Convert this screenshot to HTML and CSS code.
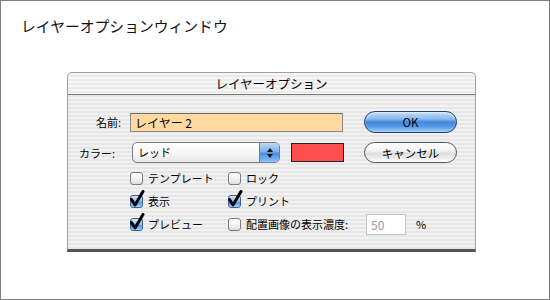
FILE: index.html
```html
<html>
<head>
    <meta charset="UTF-8">
    <link rel="stylesheet" href="styles.css">
</head>

<body>

<div class="screen">
    <h1 class="page-title">レイヤーオプションウィンドウ</h1>

    <div class="dialog">
        <div class="dialog-title">レイヤーオプション</div>
        <div class="dialog-body">
            <div class="row">
                <label class="label label-name">名前:</label>
                <div class="text-field name-field">レイヤー 2</div>
                <button class="btn btn-default">OK</button>
            </div>
            <div class="row row-color">
                <label class="label label-color">カラー:</label>
                <div class="popup">
                    <span class="popup-value">レッド</span>
                    <span class="popup-arrows">
                        <svg width="8" height="12" viewBox="0 0 8 12">
                            <path d="M4 1 L7 5 L1 5 Z" fill="#111"/>
                            <path d="M4 11 L7 7 L1 7 Z" fill="#111"/>
                        </svg>
                    </span>
                </div>
                <div class="swatch"></div>
                <button class="btn btn-cancel">キャンセル</button>
            </div>
            <div class="options">
                <div class="check"><span class="box"></span>テンプレート</div>
                <div class="check"><span class="box"></span>ロック</div>
                <div class="check">
                    <span class="box checked"><svg class="tick" width="16" height="17" viewBox="0 0 16 17"><path d="M2.5 9.5 L6 15 L14 1.5" fill="none" stroke="#000" stroke-width="3" stroke-linecap="round" stroke-linejoin="round"/></svg></span>表示
                </div>
                <div class="check">
                    <span class="box checked"><svg class="tick" width="16" height="17" viewBox="0 0 16 17"><path d="M2.5 9.5 L6 15 L14 1.5" fill="none" stroke="#000" stroke-width="3" stroke-linecap="round" stroke-linejoin="round"/></svg></span>プリント
                </div>
                <div class="check">
                    <span class="box checked"><svg class="tick" width="16" height="17" viewBox="0 0 16 17"><path d="M2.5 9.5 L6 15 L14 1.5" fill="none" stroke="#000" stroke-width="3" stroke-linecap="round" stroke-linejoin="round"/></svg></span>プレビュー
                </div>
                <div class="check">
                    <span class="box"></span>配置画像の表示濃度:
                    <div class="text-field num-field">50</div>
                    <span class="pct">%</span>
                </div>
            </div>
        </div>
    </div>
</div>

</body>

</html>
```

FILE: styles.css
```css
body {
    margin: 0;
    background: #ffffff;
    font-family: "Noto Sans CJK JP", "Noto Sans", sans-serif;
}

.screen {
    width: 550px;
    height: 300px;
    box-sizing: border-box;
    border: 1px solid #7f7f7f;
    overflow: hidden;
}

.page-title {
    margin: 0;
    padding: 16px 0 0 20px;
    font-size: 14.8px;
    line-height: 18px;
    font-weight: normal;
    color: #111;
}

/* dialog window */
.dialog {
    width: 409px;
    margin: 37px 0 0 66px;
    box-sizing: border-box;
    border: 1px solid #a0a0a0;
    border-bottom: 3px solid #555;
    border-radius: 5px 5px 0 0;
    background: repeating-linear-gradient(to bottom, #f2f2f2 0, #f2f2f2 2px, #e6e6e6 2px, #e6e6e6 4px);
    font-size: 11px;
    color: #000;
}

.dialog-title {
    height: 21px;
    line-height: 21px;
    text-align: center;
    font-size: 12.5px;
    border-bottom: 1px solid #7a7a7a;
    border-radius: 5px 5px 0 0;
    background: repeating-linear-gradient(to bottom, #f6f6f6 0, #f6f6f6 2px, #ebebeb 2px, #ebebeb 4px);
}

.dialog-body {
    padding: 16px 0 14px 0;
}

.row {
    display: flex;
    align-items: center;
    height: 22px;
}

.row-color {
    margin-top: 8px;
    height: 23px;
}

.label {
    text-align: right;
    flex: none;
}

.label-name {
    width: 53px;
    margin-right: 9px;
}

.label-color {
    width: 47px;
    margin-right: 17px;
}

.text-field {
    box-sizing: border-box;
    border: 1px solid #8c8c8c;
    border-top-color: #6e6e6e;
    background: #fff;
    padding-left: 4px;
    line-height: 17px;
}

.name-field {
    width: 213px;
    height: 19px;
    background: #fed9a0;
    font-size: 12px;
    margin-right: 21px;
}

/* aqua buttons */
.btn {
    width: 93px;
    height: 21px;
    border-radius: 11px;
    font-family: inherit;
    font-size: 11.5px;
    font-weight: normal;
    color: #000;
    padding: 0;
    outline: none;
}

.btn-default {
    height: 22px;
    border: 1px solid #23406e;
    background: linear-gradient(to bottom, #c3ddf7 0%, #8ab9ee 35%, #3f86de 50%, #5b9ce8 75%, #a6d3fc 100%);
    box-shadow: inset 0 1px 2px rgba(255, 255, 255, 0.6);
}

.btn-cancel {
    border: 1px solid #555;
    background: linear-gradient(to bottom, #ffffff 0%, #f4f4f4 40%, #dedede 55%, #eeeeee 80%, #ffffff 100%);
}

/* popup menu */
.popup {
    width: 148px;
    height: 21px;
    box-sizing: border-box;
    display: flex;
    border: 1px solid #7d7d7d;
    border-radius: 5px;
    background: linear-gradient(to bottom, #ffffff 0%, #f7f7f7 50%, #e8e8e8 100%);
    overflow: hidden;
    margin-right: 11px;
}

.popup-value {
    flex: 1;
    padding-left: 5px;
    line-height: 19px;
}

.popup-arrows {
    width: 19px;
    display: flex;
    align-items: center;
    justify-content: center;
    border-left: 1px solid #5e7fb4;
    background: linear-gradient(to bottom, #bcd9f6 0%, #7fb1ec 45%, #4a8ee0 55%, #8ac4fb 100%);
}

.swatch {
    width: 53px;
    height: 19px;
    box-sizing: border-box;
    border: 1px solid #222;
    background: #ff4e4e;
    margin-right: 20px;
}

/* check boxes */
.options {
    display: grid;
    grid-template-columns: 98px auto;
    grid-auto-rows: 22px;
    row-gap: 1px;
    margin: 3px 0 0 62px;
}

.check {
    display: flex;
    align-items: center;
}

.box {
    position: relative;
    width: 13px;
    height: 13px;
    box-sizing: border-box;
    border: 1px solid #7c7c7c;
    border-radius: 3px;
    background: linear-gradient(to bottom, #ffffff 0%, #f0f0f0 60%, #dcdcdc 100%);
    margin-right: 5px;
    flex: none;
}

.box.checked {
    border-color: #3c5f95;
    background: linear-gradient(to bottom, #d6eafe 0%, #86bdf3 50%, #4e93e2 60%, #a9d6ff 100%);
}

.tick {
    position: absolute;
    left: -2px;
    top: -6px;
}

.num-field {
    width: 40px;
    height: 21px;
    margin-left: 18px;
    font-size: 12px;
    color: #9a9a9a;
    border-color: #c4c4c4;
    line-height: 19px;
}

.pct {
    margin-left: 10px;
}
```
